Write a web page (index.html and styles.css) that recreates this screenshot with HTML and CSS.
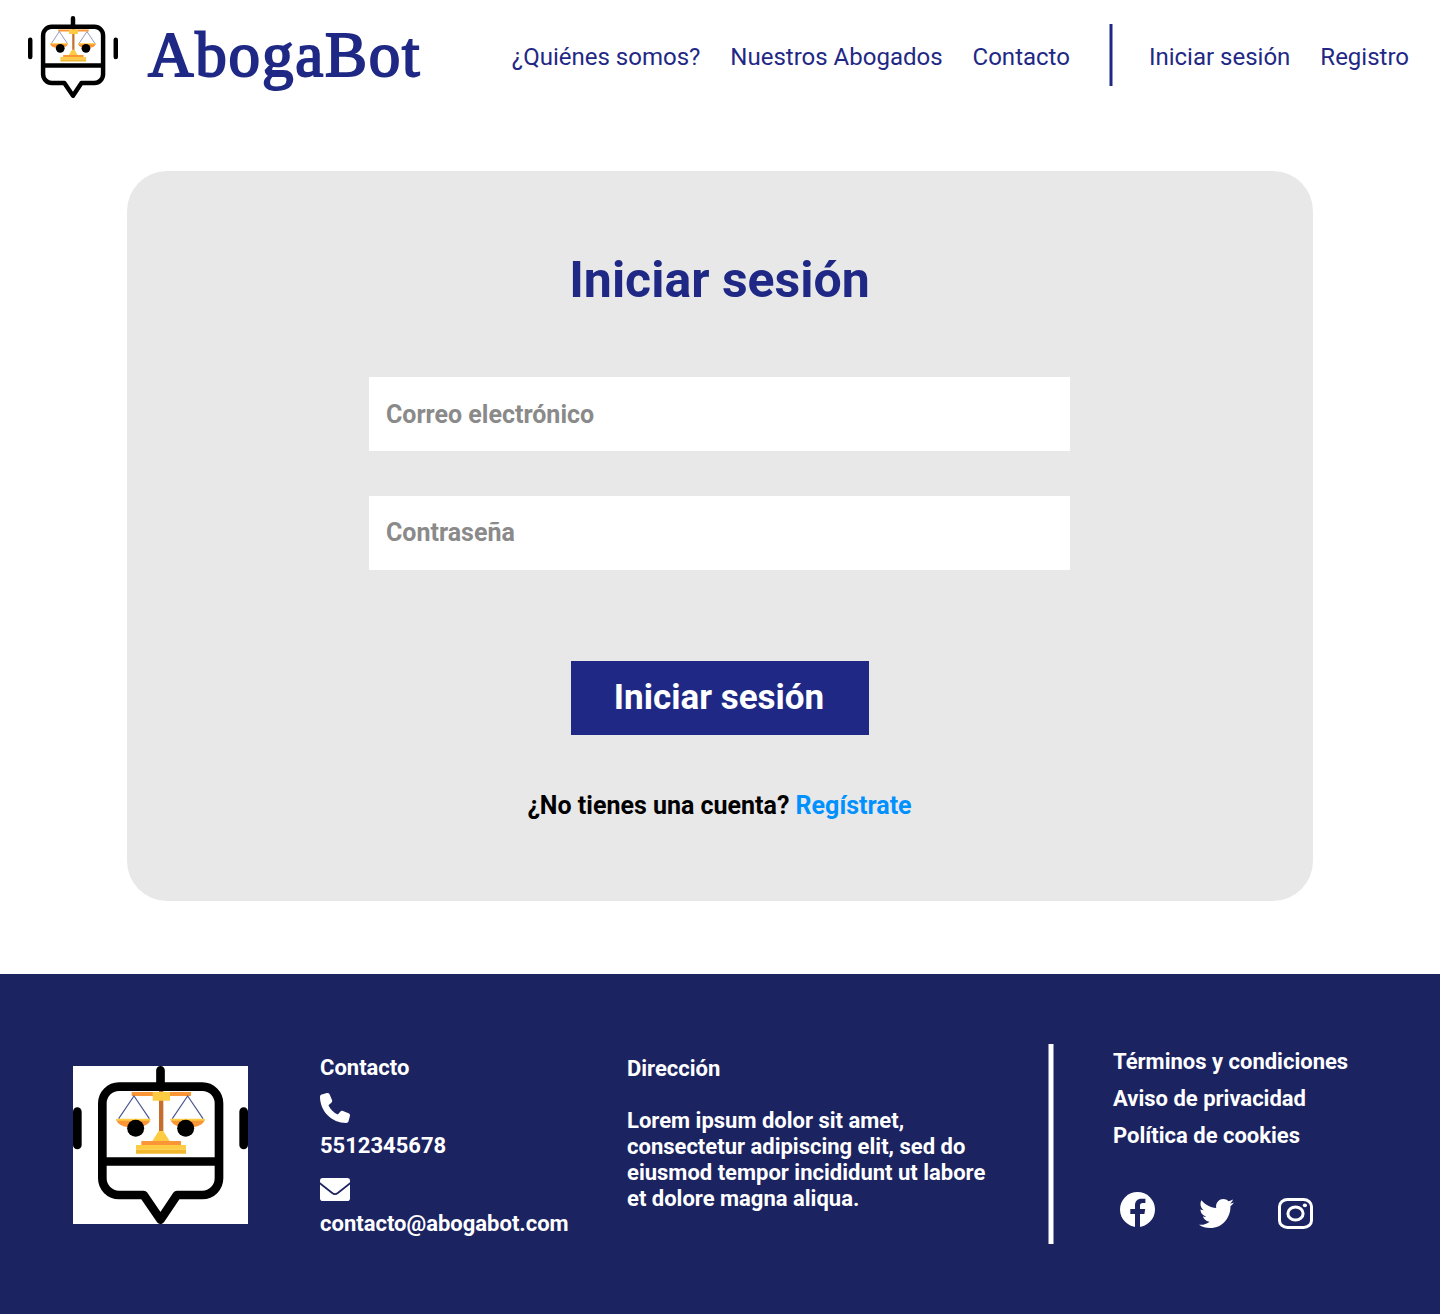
FILE: index.html
```html
<!DOCTYPE html>
<html lang="es">
<head>
<meta charset="utf-8">
<title>AbogaBot - Iniciar sesión</title>
<link rel="stylesheet" href="styles.css">
</head>
<body>
<svg class="sprite" aria-hidden="true">
  <symbol id="robot" viewBox="0 0 525 474" preserveAspectRatio="none">
    <path fill="#c66e2e" d="M258 72h13v124h-13z"/>
    <path fill="#fb9636" d="M176 78h178v12H176zM205 225h119v12H205zM129 160h104c-4 17-26 25-52 25s-48-8-52-25zM292 160h104c-4 17-26 25-52 25s-48-8-52-25z"/>
    <path fill="#fecc43" d="M239 78h52v26h-52zM257 195h14l19 30h-52zM189 237h150v14H189zM129 158h104l-3 6h-98zM292 158h104l-3 6h-98z"/>
    <path fill="#f1b72f" d="M189 251h150v12H189z"/>
    <path fill="none" stroke="#4a5690" stroke-width="3.5" d="M137 158l46-68 46 68M298 158l46-68 46 68"/>
    <circle cx="188" cy="187" r="25.5"/><circle cx="338" cy="187" r="25.5"/>
    <path fill="none" stroke="#000" stroke-width="26" stroke-linecap="round" stroke-linejoin="round" d="M262.5 13v40M13 137v100M512 137v100M88 286.500h350M138 62h250a50 50 0 0 1 50 50v225a50 50 0 0 1-50 50h-76L262.500 461 212 387h-74a50 50 0 0 1-50-50v-225a50 50 0 0 1 50-50z"/>
  </symbol>
</svg>

<header class="header">
  <a class="brand">
    <svg class="brand-logo"><use href="#robot"/></svg>
    <span class="brand-name">AbogaBot</span>
  </a>
  <nav class="nav">
    <a>¿Quiénes somos?</a>
    <a>Nuestros Abogados</a>
    <a>Contacto</a>
    <span class="nav-divider"></span>
    <a>Iniciar sesión</a>
    <a>Registro</a>
  </nav>
</header>

<main class="card">
  <h1 class="title">Iniciar sesión</h1>
  <form class="form">
    <input class="field" type="email" placeholder="Correo electrónico">
    <input class="field field-password" type="password" placeholder="Contraseña">
    <button class="submit" type="button">Iniciar sesión</button>
  </form>
  <p class="signup">¿No tienes una cuenta? <a class="signup-link">Regístrate</a></p>
</main>

<footer class="footer">
  <div class="footer-logo"><svg><use href="#robot"/></svg></div>
  <section class="contact">
    <p>Contacto</p>
    <svg class="phone" viewBox="0 0 512 512"><path fill="#fff" d="M164.900 24.600c-7.700-18.600-28-28.500-47.400-23.200l-88 24C12.100 30.200 0 46 0 64C0 311.400 200.600 512 448 512c18 0 33.800-12.100 38.600-29.500l24-88c5.300-19.400-4.600-39.700-23.200-47.400l-96-40c-16.300-6.800-35.200-2.100-46.300 11.600L304.700 368C234.300 334.700 177.300 277.700 144 207.300L193.300 167c13.700-11.200 18.400-30 11.600-46.300l-40-96z"/></svg>
    <p>5512345678</p>
    <svg class="mail" viewBox="0 0 30 23"><rect width="30" height="23" rx="2.800" fill="#fff"/><path fill="none" stroke="#1c2361" stroke-width="1.700" d="M-.5 5 12.200 15Q15 17.200 17.800 15L30.500 5"/></svg>
    <p>contacto@abogabot.com</p>
  </section>
  <section class="address">
    <p>Dirección</p>
    <p class="address-text">Lorem ipsum dolor sit amet,<br>consectetur adipiscing elit, sed do<br>eiusmod tempor incididunt ut labore<br>et dolore magna aliqua.</p>
  </section>
  <div class="footer-divider"></div>
  <section class="legal">
    <a>Términos y condiciones</a>
    <a>Aviso de privacidad</a>
    <a>Política de cookies</a>
    <div class="social">
      <svg class="facebook" viewBox="0 0 35 35"><circle cx="17.500" cy="17.500" r="17.500" fill="#fff"/><path fill="#1c2361" d="M15 35V22h-4.700v-5H15v-3.500C15 9 17.500 6.700 21.500 6.700h3.900v4.400h-2.800c-1.800 0-2.600.9-2.600 2.500V17h5.200l-.8 5H20v13z"/></svg>
      <svg class="twitter" viewBox="0 48 512 416" preserveAspectRatio="none"><path fill="#fff" d="M459.370 151.716c.325 4.548.325 9.097.325 13.645 0 138.720-105.583 298.558-298.558 298.558-59.452 0-114.680-17.219-161.137-47.106 8.447.974 16.568 1.299 25.340 1.299 49.055 0 94.213-16.568 130.274-44.832-46.132-.975-84.792-31.188-98.112-72.772 6.498.974 12.995 1.624 19.818 1.624 9.421 0 18.843-1.300 27.614-3.573-48.081-9.747-84.143-51.980-84.143-102.985v-1.299c13.969 7.797 30.214 12.670 47.431 13.319-28.264-18.843-46.781-51.005-46.781-87.391 0-19.492 5.197-37.360 14.294-52.954 51.655 63.675 129.300 105.258 216.365 109.807-1.624-7.797-2.599-15.918-2.599-24.040 0-57.828 46.782-104.934 104.934-104.934 30.213 0 57.502 12.670 76.670 33.137 23.715-4.548 46.456-13.320 66.599-25.340-7.798 24.366-24.366 44.833-46.132 57.827 21.117-2.273 41.584-8.122 60.426-16.243-14.292 20.791-32.161 39.308-52.628 54.253z"/></svg>
      <svg class="instagram" viewBox="0 0 35 31"><g fill="none" stroke="#fff" stroke-width="3"><rect x="1.500" y="1.500" width="32" height="28" rx="8" ry="7"/><ellipse cx="17.500" cy="15.500" rx="7.600" ry="6.600"/></g><ellipse cx="26.900" cy="7.300" rx="2.100" ry="1.900" fill="#fff"/></svg>
    </div>
  </section>
</footer>
</body>
</html>
```
FILE: styles.css
```css
* { box-sizing: border-box; }

body {
  margin: 0;
  background: #fff;
  font-family: Roboto, "Liberation Sans", sans-serif;
  color: #000;
}

p, h1 { margin: 0; }
svg { display: block; flex: none; }
.sprite { width: 0; height: 0; position: absolute; }

.header {
  display: flex;
  align-items: center;
  justify-content: space-between;
  height: 114px;
  padding: 0 31px 0 28px;
  color: #1f2985;
}

.brand { display: flex; align-items: center; gap: 30px; }
.brand-logo { width: 90px; height: 82px; }

.brand-name {
  margin-bottom: 4px;
  font: 63px/70px "Liberation Serif", serif;
  letter-spacing: 1.8px;
  -webkit-text-stroke: 2px #1f2985;
}

.nav {
  display: flex;
  align-items: center;
  gap: 30px;
  font-size: 24px;
  line-height: 28px;
  white-space: nowrap;
}

.nav-divider {
  width: 4px;
  height: 62px;
  margin: 0 6px 4px 9px;
  border: solid #8f94c2;
  border-width: 0 1px;
  background: #1f2985;
}

.card {
  display: flex;
  flex-direction: column;
  align-items: center;
  width: 1186px;
  height: 730px;
  margin: 57px auto 73px;
  padding-top: 79px;
  border-radius: 40px;
  background: #e8e8e8;
}

.title {
  padding-right: 1px;
  color: #1f2985;
  font-size: 50px;
  font-weight: 700;
  line-height: 60px;
}

.form {
  display: flex;
  flex-direction: column;
  align-items: center;
  gap: 45px;
  margin-top: 67px;
}

.field {
  width: 701px;
  height: 74px;
  margin-right: 2px;
  padding: 0 17.5px;
  border: 0;
  background: #fff;
  font: 700 25px Roboto, sans-serif;
}

.field-password { padding-bottom: 2px; }
.field::placeholder { color: #8a8a8a; opacity: 1; }

.submit {
  width: 298px;
  height: 74px;
  margin-top: 46px;
  padding: 0 2px 2px 0;
  border: 0;
  background: #1f2985;
  color: #fff;
  font: 700 35px Roboto, sans-serif;
}

.signup {
  margin-top: 56px;
  padding-right: 1px;
  font-size: 25px;
  font-weight: 700;
  line-height: 30px;
}

.signup-link { color: #0091ff; }

.footer {
  display: flex;
  align-items: flex-start;
  height: 340px;
  padding: 70px 73px 0;
  background: #1c2361;
  color: #fff;
  font-size: 22px;
  font-weight: 700;
  line-height: 26px;
  white-space: nowrap;
}

.footer-logo { margin-top: 22px; background: #fff; }
.footer-logo svg { width: 175px; height: 158px; }

.contact { width: 307px; margin: 11px 0 0 72px; }
.phone { width: 30px; height: 30px; margin: 12px 0 10px; }
.mail { width: 30px; height: 23px; margin: 19px 0 10px; }

.address { width: 421px; margin-top: 12px; }
.address-text { margin-top: 26px; }

.footer-divider {
  width: 6px;
  height: 200px;
  border: solid #8d91b0;
  border-width: 0 1px;
  background: #fff;
}

.legal {
  display: flex;
  flex-direction: column;
  gap: 11px;
  margin: 5px 0 0 59px;
}

.social {
  display: flex;
  align-items: center;
  gap: 44px;
  margin: 30px 0 0 7px;
}

.facebook { width: 35px; height: 35px; }
.twitter { width: 35px; height: 29px; margin-top: 8px; }
.instagram { width: 35px; height: 31px; margin-top: 8px; }
```
